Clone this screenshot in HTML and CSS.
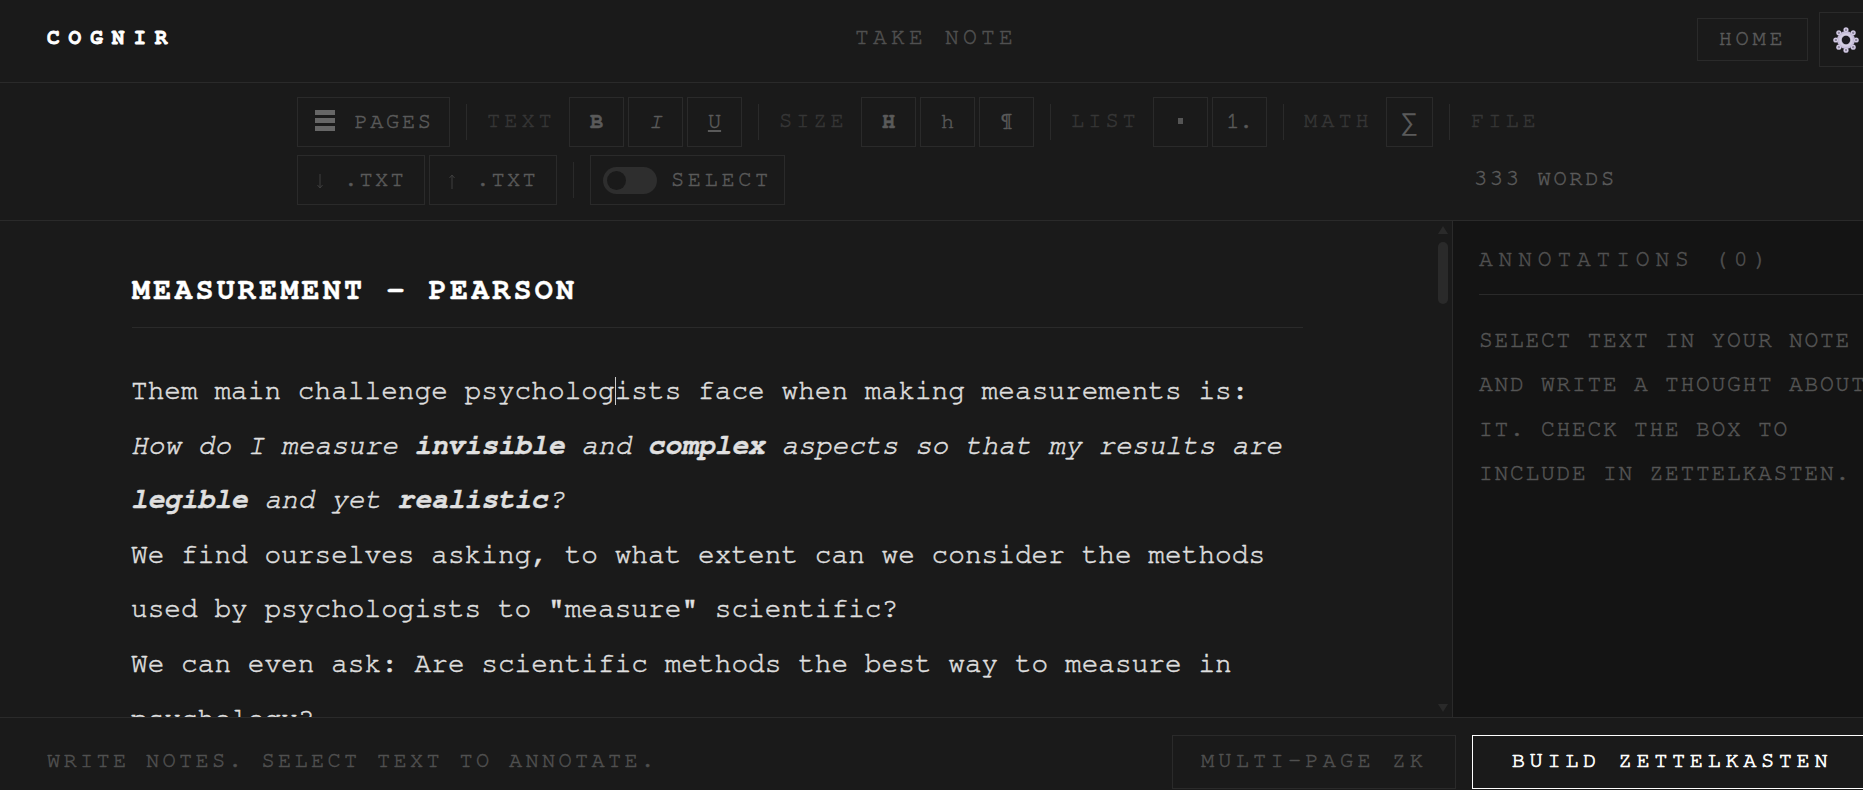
FILE: index.html
```html
<!doctype html>
<html lang="en">
<head>
    <meta charset="UTF-8">
    <title>Cognir</title>
    <link rel="stylesheet" href="styles.css">
</head>
<body>
<div class="page">
    <header class="topbar">
        <div class="logo">COGNIR</div>
        <div class="title">TAKE NOTE</div>
        <nav class="topnav">
            <a class="home">HOME</a>
            <a class="gear">
                <svg width="26" height="26" viewBox="0 0 26 26">
                    <defs>
                        <radialGradient id="gearfill">
                            <stop offset="0.3" stop-color="#8f86a0"/>
                            <stop offset="0.6" stop-color="#d8d2e6"/>
                            <stop offset="1" stop-color="#bdb2d2"/>
                        </radialGradient>
                    </defs>
                    <g fill="url(#gearfill)">
                        <circle cx="13" cy="13" r="9"/>
                        <circle cx="13" cy="2.8" r="2.6"/>
                        <circle cx="13" cy="23.2" r="2.6"/>
                        <circle cx="2.8" cy="13" r="2.6"/>
                        <circle cx="23.2" cy="13" r="2.6"/>
                        <circle cx="5.8" cy="5.8" r="2.6"/>
                        <circle cx="20.2" cy="5.8" r="2.6"/>
                        <circle cx="5.8" cy="20.2" r="2.6"/>
                        <circle cx="20.2" cy="20.2" r="2.6"/>
                    </g>
                    <circle cx="13" cy="13" r="4.2" fill="#1c1a20"/>
                </svg>
            </a>
        </nav>
    </header>

    <div class="toolbar">
        <div class="toolrow">
            <button class="btn pages"><span class="burger"><i></i><i></i><i></i></span>PAGES</button>
            <span class="sep"></span>
            <span class="label">TEXT</span>
            <button class="btn sq"><b>B</b></button>
            <button class="btn sq"><em>I</em></button>
            <button class="btn sq"><u>U</u></button>
            <span class="sep"></span>
            <span class="label">SIZE</span>
            <button class="btn sq"><b>H</b></button>
            <button class="btn sq">h</button>
            <button class="btn sq">¶</button>
            <span class="sep"></span>
            <span class="label">LIST</span>
            <button class="btn sq"><span class="dot"></span></button>
            <button class="btn sq">1.</button>
            <span class="sep"></span>
            <span class="label">MATH</span>
            <button class="btn sq sigma">∑</button>
            <span class="sep"></span>
            <span class="label">FILE</span>
        </div>
        <div class="toolrow row2">
            <button class="btn file">
                <svg class="arrow" width="8" height="15" viewBox="0 0 8 15"><path d="M4 0v14M1.500 11L4 14l2.500-3" fill="none" stroke="#3e3e3e" stroke-width="1"/></svg>.TXT
            </button>
            <button class="btn file">
                <svg class="arrow" width="8" height="15" viewBox="0 0 8 15"><path d="M4 15V1M1.500 4L4 1l2.500 3" fill="none" stroke="#3e3e3e" stroke-width="1"/></svg>.TXT
            </button>
            <span class="sep"></span>
            <button class="btn select"><span class="toggle"><span class="knob"></span></span>SELECT</button>
            <span class="words">333 WORDS</span>
        </div>
    </div>

    <main class="main">
        <section class="editor">
            <div class="sheet">
                <h1 class="note-title">MEASUREMENT - PEARSON</h1>
                <div class="note">
                    <p>Them main challenge psycholog<span class="caret"></span>ists face when making measurements is:</p>
                    <p><em>How do I measure <b>invisible</b> and <b>complex</b> aspects so that my results are <b>legible</b> and yet <b>realistic</b>?</em></p>
                    <p>We find ourselves asking, to what extent can we consider the methods used by psychologists to "measure" scientific?</p>
                    <p>We can even ask: Are scientific methods the best way to measure in psychology?</p>
                </div>
            </div>
            <div class="scroll">
                <span class="up"></span>
                <span class="thumb"></span>
                <span class="down"></span>
            </div>
        </section>
        <aside class="notes">
            <h2 class="notes-head">ANNOTATIONS (0)</h2>
            <p class="notes-empty">SELECT TEXT IN YOUR NOTE AND WRITE A THOUGHT ABOUT IT. CHECK THE BOX TO INCLUDE IN ZETTELKASTEN.</p>
        </aside>
    </main>

    <footer class="footer">
        <div class="hint">WRITE NOTES. SELECT TEXT TO ANNOTATE.</div>
        <button class="btn multi">MULTI-PAGE ZK</button>
        <button class="btn build">BUILD ZETTELKASTEN</button>
    </footer>
</div>
</body>
</html>
```

FILE: styles.css
```css
*{
    box-sizing: border-box;
}
html,body{
    margin: 0;
    height: 100%;
    overflow: hidden;
}
body{
    background-color: #1a1a1a;
    color: #e0e0e0;
    font-family: FreeMono, "Liberation Mono", monospace;
    -webkit-text-stroke: 0.45px;
}
.page{
    display: flex;
    flex-direction: column;
    height: 790px;
    width: 1863px;
}
.topbar{
    display: flex;
    align-items: center;
    height: 83px;
    flex: none;
    border-bottom: 1px solid #2a2a2a;
    padding: 0 0 3px 47px;
}
.logo{
    width: 808px;
    flex: none;
    margin-bottom: 4px;
    font-size: 21px;
    font-weight: bold;
    letter-spacing: 9px;
    color: #fff;
    -webkit-text-stroke: 0.8px;
}
.title{
    width: 842px;
    flex: none;
    margin-bottom: 4px;
    white-space: nowrap;
    font-size: 23px;
    letter-spacing: 4.2px;
    color: #505050;
}
.topnav{
    display: flex;
    align-items: center;
    gap: 11px;
    flex: none;
}
.home{
    display: flex;
    align-items: center;
    justify-content: center;
    width: 111px;
    height: 43px;
    padding-bottom: 4px;
    border: 1px solid #2a2a2a;
    font-size: 22px;
    letter-spacing: 3.7px;
    color: #5a5a5a;
}
.gear{
    display: flex;
    align-items: center;
    justify-content: center;
    width: 54px;
    height: 55px;
    border: 1px solid #2a2a2a;
}
.toolbar{
    flex: none;
    height: 138px;
    border-bottom: 1px solid #2a2a2a;
    padding: 14px 246px 0 297px;
}
.toolrow{
    display: flex;
    align-items: center;
    height: 50px;
}
.row2{
    margin-top: 8px;
}
.btn{
    display: flex;
    align-items: center;
    justify-content: center;
    height: 100%;
    background: none;
    border: 1px solid #2a2a2a;
    padding: 0 0 3px;
    font-family: inherit;
    font-size: 22px;
    letter-spacing: 2.6px;
    color: #5a5a5a;
    -webkit-text-stroke: 0.45px;
}
.pages{
    width: 153px;
}
.burger{
    display: flex;
    flex-direction: column;
    gap: 3px;
    margin: 0 19px 0 2px;
}
.burger i{
    display: block;
    width: 20px;
    height: 5px;
    background-color: #666;
}
.sep{
    flex: none;
    width: 1px;
    height: 36px;
    margin: 0 16px;
    background-color: #2a2a2a;
}
.label{
    font-size: 22px;
    letter-spacing: 4px;
    color: #363636;
    width: 70px;
    margin: 0 12px 4px 4px;
    flex: none;
}
.label:last-child{
    margin-left: 5px;
}
.sq{
    width: 55px;
    margin-right: 4px;
    letter-spacing: 0;
    flex: none;
}
.sq:has(+ .sep){
    margin-right: 0;
}
.dot{
    display: block;
    width: 5px;
    height: 6px;
    background-color: #555;
}
.sigma{
    width: 47px;
    padding: 3px 0 0;
    font-family: "Liberation Mono", monospace;
    font-size: 25px;
    font-weight: normal;
    -webkit-text-stroke: 0;
}
.file{
    width: 128px;
    margin-right: 4px;
    letter-spacing: 2.2px;
}
.file:has(+ .sep){
    margin-right: 0;
}
.arrow{
    margin: 5px 20px 0 0;
}
.select{
    width: 195px;
    justify-content: flex-start;
    padding-left: 12px;
    letter-spacing: 3.6px;
}
.toggle{
    display: block;
    width: 54px;
    height: 27px;
    margin: 3px 14px 0 0;
    border-radius: 14px;
    background-color: #2e2e2e;
    padding: 4px;
}
.knob{
    display: block;
    width: 19px;
    height: 19px;
    border-radius: 50%;
    background-color: #1a1a1a;
}
.words{
    margin: 0 0 4px auto;
    font-size: 22px;
    letter-spacing: 2.7px;
    color: #5a5a5a;
}
.main{
    flex: 1;
    min-height: 0;
    display: flex;
}
.editor{
    position: relative;
    width: 1453px;
    flex: none;
    overflow: hidden;
    border-right: 1px solid #2a2a2a;
}
.sheet{
    padding: 52px 0 0 132px;
    width: 1303px;
}
.note-title{
    margin: 0 0 36px;
    padding-bottom: 20px;
    border-bottom: 1px solid #2a2a2a;
    font-size: 30px;
    line-height: 34px;
    letter-spacing: 3.2px;
    color: #fff;
}
.note{
    margin-left: -1px;
    font-size: 27.8px;
    line-height: 54.6px;
    color: #e0e0e0;
}
.note p{
    margin: 0;
}
.caret{
    border-left: 1px solid #ccc;
    margin-right: -1px;
}
.scroll{
    position: absolute;
    top: 4px;
    bottom: 4px;
    right: 4px;
    width: 10px;
}
.thumb{
    position: absolute;
    top: 17px;
    left: 0;
    width: 10px;
    height: 62px;
    border-radius: 5px;
    background-color: #2a2a2a;
}
.up,.down{
    position: absolute;
    left: 0;
    width: 0;
    height: 0;
    border-left: 5px solid transparent;
    border-right: 5px solid transparent;
}
.up{
    top: 1px;
    border-bottom: 8px solid #2a2a2a;
}
.down{
    bottom: 1px;
    border-top: 8px solid #2a2a2a;
}
.notes{
    flex: 1;
    min-width: 0;
    background-color: #141414;
    padding: 25px 0 0 26px;
    overflow: hidden;
}
.notes-head{
    margin: 0;
    width: 420px;
    padding-bottom: 20px;
    border-bottom: 1px solid #2a2a2a;
    font-size: 23px;
    font-weight: normal;
    line-height: 28px;
    letter-spacing: 5.8px;
    color: #505050;
}
.notes-empty{
    margin: 24px 0 0;
    width: 410px;
    font-size: 23px;
    line-height: 44.4px;
    letter-spacing: 1.7px;
    color: #555;
}
.footer{
    flex: none;
    height: 73px;
    display: flex;
    align-items: center;
    border-top: 1px solid #2a2a2a;
    padding: 15px 0 0 47px;
}
.hint{
    width: 1125px;
    flex: none;
    margin-bottom: 4px;
    font-size: 22px;
    letter-spacing: 3.3px;
    color: #505050;
}
.footer .btn{
    height: 54px;
    flex: none;
}
.multi{
    width: 284px;
    margin-right: 16px;
    padding-bottom: 4px;
    letter-spacing: 4.2px;
    color: #505050;
}
.footer .build{
    width: 400px;
    padding-bottom: 4px;
    border: 1px solid #fff;
    color: #fff;
    letter-spacing: 4.6px;
    -webkit-text-stroke: 0.7px;
}
```
